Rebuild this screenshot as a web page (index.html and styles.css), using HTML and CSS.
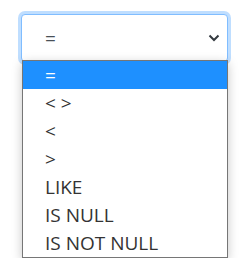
FILE: index.html
```html
<!DOCTYPE html>
<html lang="en">
<head>
    <meta charset="utf-8"/>
    <meta name="viewport" content="width=device-width, initial-scale=1.0">
    <title>Operator select</title>
    <link rel="stylesheet" href="styles.css">
</head>
<body>
    <div class="container">
        <div class="field">
            <div class="field-box">
                <span class="field-value">=</span>
                <svg class="chevron" viewBox="0 0 12 8" width="12" height="8"><path d="M1.5 1.5 L6 6 L10.5 1.5" fill="none" stroke="#343a40" stroke-width="2"/></svg>
            </div>
            <div class="op-list">
                <div class="op-item op-current">=</div>
                <div class="op-item">&lt; &gt;</div>
                <div class="op-item">&lt;</div>
                <div class="op-item">&gt;</div>
                <div class="op-item">LIKE</div>
                <div class="op-item">IS NULL</div>
                <div class="op-item">IS NOT NULL</div>
            </div>
        </div>
    </div>
</body>
</html>
```

FILE: styles.css
```css
body {
    margin: 0;
    padding: 0;
    background-color: #fff;
    font-family: "Open Sans", "Noto Sans", sans-serif;
    color: #333;
}
.container {
    padding: 14px 0 0 21px;
}
.field {
    width: 207px;
}
.field-box {
    height: 48px;
    box-sizing: border-box;
    border: 1px solid #80bdff;
    border-radius: 4px;
    box-shadow: 0 0 0 3px rgba(0, 123, 255, 0.25);
    background: #fff;
    display: flex;
    align-items: center;
    justify-content: space-between;
    padding: 0 7px 0 23px;
    color: #495057;
    font-size: 19px;
}
.chevron {
    display: block;
}
.op-list {
    position: relative;
    margin: -2px 0 0 1px;
    width: 206px;
    box-sizing: border-box;
    background: #fff;
    border: 1px solid #767676;
    box-shadow: 0 3px 10px rgba(0, 0, 0, 0.22);
}
.op-item {
    height: 28px;
    line-height: 28px;
    padding-left: 22px;
    font-size: 19px;
    color: #333;
    white-space: nowrap;
}
.op-current {
    background-color: #1e90ff;
    color: #fff;
}
```
